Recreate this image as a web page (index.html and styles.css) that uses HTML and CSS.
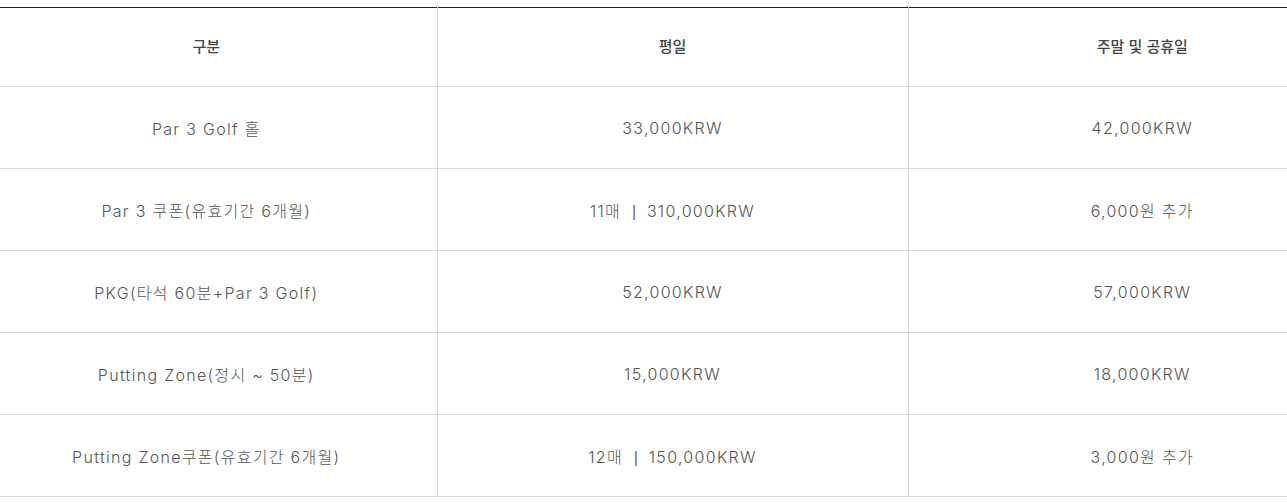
FILE: index.html
```html
<!DOCTYPE html>
<html lang="ko">
<head>
<meta charset="utf-8">
<title>요금 안내</title>
<link rel="stylesheet" href="styles.css">
</head>
<body>
<div class="wrap">
  <table class="price">
    <colgroup>
      <col class="c1"><col class="c2"><col class="c3">
    </colgroup>
    <thead>
      <tr><th>구분</th><th>평일</th><th>주말 및 공휴일</th></tr>
    </thead>
    <tbody>
      <tr><td>Par 3 Golf 홀</td><td>33,000KRW</td><td>42,000KRW</td></tr>
      <tr><td>Par 3 쿠폰(유효기간 6개월)</td><td>11매 <span class="sep">|</span> 310,000KRW</td><td>6,000원 추가</td></tr>
      <tr><td>PKG(타석 60분+Par 3 Golf)</td><td>52,000KRW</td><td>57,000KRW</td></tr>
      <tr><td>Putting Zone(정시 ~ 50분)</td><td>15,000KRW</td><td>18,000KRW</td></tr>
      <tr><td>Putting Zone쿠폰(유효기간 6개월)</td><td>12매 <span class="sep">|</span> 150,000KRW</td><td>3,000원 추가</td></tr>
    </tbody>
  </table>
</div>
</body>
</html>
```
FILE: styles.css
```css
html, body {
  margin: 0;
  padding: 0;
  background: #fff;
  overflow: hidden;
}
.wrap {
  padding-top: 7px;
  overflow: hidden;
}
.price {
  border-collapse: collapse;
  table-layout: fixed;
  width: 1400px;
  margin-left: -24px;
  border-top: 1px solid #222;
  font-family: "Inter", "Noto Sans CJK KR", sans-serif;
}
.c1 { width: 461px; }
.c2 { width: 471px; }
.c3 { width: 468px; }
.price th,
.price td {
  text-align: center;
  vertical-align: middle;
  border-bottom: 1px solid #d9d9d9;
  border-left: 1px solid #d9d9d9;
  padding: 0;
}
.price th:first-child,
.price td:first-child {
  border-left: none;
}
.price th {
  height: 74px;
  padding-bottom: 4px;
  font-family: "Noto Sans CJK KR", sans-serif;
  font-size: 15px;
  font-weight: 500;
  color: #444;
}
.price td {
  height: 81px;
  font-size: 16px;
  font-weight: 300;
  letter-spacing: 1.3px;
  color: #555;
}
.sep {
  display: inline-block;
  margin: 0 5px;
  font-family: "Liberation Sans", sans-serif;
  font-weight: 400;
  color: #666;
  letter-spacing: 0;
}
```
